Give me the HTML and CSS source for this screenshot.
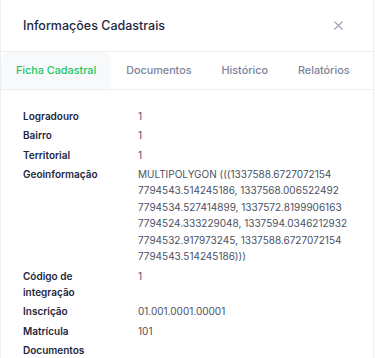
FILE: index.html
```html
<!DOCTYPE html>
<html lang="pt-BR">
<head>
    <meta charset="UTF-8">
    <meta name="viewport" content="width=device-width, initial-scale=1.0">
    <title>Informações Cadastrais</title>
    <link rel="stylesheet" href="styles.css">
</head>
<body>
    <div class="modal">
        <header class="modal-header">
            <h1>Informações Cadastrais</h1>
            <button class="btn-close" aria-label="Fechar">
                <svg width="9" height="9" viewBox="0 0 10 10">
                    <path d="M1 1 L9 9 M9 1 L1 9" stroke="currentColor" stroke-width="1.5" stroke-linecap="round"/>
                </svg>
            </button>
        </header>

        <nav class="tabs">
            <a href="#" class="tab active">Ficha Cadastral</a>
            <a href="#" class="tab">Documentos</a>
            <a href="#" class="tab">Histórico</a>
            <a href="#" class="tab">Relatórios</a>
        </nav>

        <div class="ficha">
            <div class="row">
                <span class="label">Logradouro</span>
                <span class="value">1</span>
            </div>
            <div class="row">
                <span class="label">Bairro</span>
                <span class="value">1</span>
            </div>
            <div class="row">
                <span class="label">Territorial</span>
                <span class="value">1</span>
            </div>
            <div class="row">
                <span class="label">Geoinformação</span>
                <span class="value">MULTIPOLYGON (((1337588.6727072154 7794543.514245186, 1337568.006522492 7794534.527414899, 1337572.8199906163 7794524.333229048, 1337594.0346212932 7794532.917973245, 1337588.6727072154 7794543.514245186)))</span>
            </div>
            <div class="row">
                <span class="label">Código de integração</span>
                <span class="value">1</span>
            </div>
            <div class="row">
                <span class="label">Inscrição</span>
                <span class="value">01.001.0001.00001</span>
            </div>
            <div class="row">
                <span class="label">Matrícula</span>
                <span class="value">101</span>
            </div>
            <div class="row">
                <span class="label">Documentos</span>
                <span class="value"></span>
            </div>
        </div>
    </div>
</body>
</html>
```

FILE: styles.css
```css
body {
    margin: 0;
    font-family: Inter, "Noto Sans", sans-serif;
    background: #ffffff;
}

.modal {
    width: 372px;
    height: 358px;
    background: #ffffff;
    border-left: 1px solid #eceef1;
    border-right: 1px solid #eceef1;
}

.modal-header {
    height: 51px;
    display: flex;
    align-items: center;
    justify-content: space-between;
    padding: 0 30px 0 22px;
    border-bottom: 1px solid #eceef1;
}

.modal-header h1 {
    margin: 0;
    font-size: 12.5px;
    font-weight: 500;
    color: #1e2740;
}

.btn-close {
    border: none;
    background: none;
    padding: 0;
    color: #a0a8b8;
    display: flex;
    cursor: pointer;
}

.tabs {
    display: flex;
    height: 37px;
    border-bottom: 1px solid #eceef1;
}

.tab {
    display: flex;
    align-items: center;
    padding: 0 15px;
    font-size: 10.8px;
    font-weight: 500;
    color: #7a839b;
    text-decoration: none;
    white-space: nowrap;
    border-radius: 7px 7px 0 0;
}

.tab.active {
    color: #22c55e;
    background: #f8f9fa;
}

.ficha {
    padding: 18px 22px 0 22px;
}

.row {
    display: flex;
    gap: 19px;
    padding-bottom: 2.8px;
    line-height: 16.5px;
    font-size: 10px;
}

.label {
    width: 96px;
    flex-shrink: 0;
    font-weight: 600;
    color: #1e2740;
}

.value {
    color: #4a5163;
    flex: 1;
}
```
